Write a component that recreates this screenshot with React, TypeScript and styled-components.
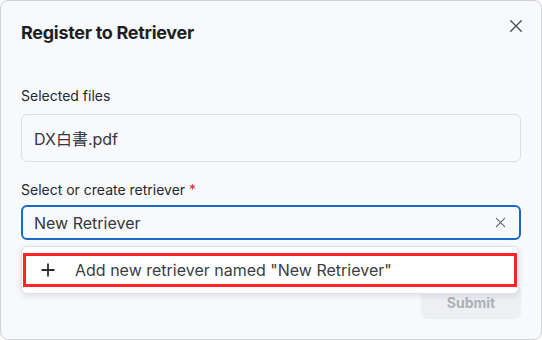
import React from "react";
import styled, { createGlobalStyle } from "styled-components";

const Global = createGlobalStyle`
  html, body { margin: 0; padding: 0; background: #ffffff; }
  body { font-family: Inter, "Noto Sans CJK JP", "Noto Sans", sans-serif; }
  * { box-sizing: border-box; }
`;

const Dialog = styled.div`
  position: relative;
  width: 542px;
  height: 340px;
  border: 1px solid #cdd2da;
  border-radius: 8px;
  background: #f8f9fc;
  padding: 20px 20px 20px 20px;
  display: flex;
  flex-direction: column;
`;

const Header = styled.div`
  display: flex;
  justify-content: space-between;
  align-items: flex-start;
  height: 24px;
`;

const Title = styled.h2`
  margin: 0;
  font-size: 18px;
  line-height: 24px;
  font-weight: 700;
  color: #1d1f23;
  letter-spacing: -0.3px;
`;

const IconButton = styled.button`
  border: none;
  background: none;
  padding: 0;
  margin: -3px -3px 0 0;
  width: 16px;
  height: 16px;
  display: flex;
  align-items: center;
  justify-content: center;
  color: #4b4f57;
  cursor: pointer;
`;

const Field = styled.div<{ $top: number }>`
  margin-top: ${(p) => p.$top}px;
  display: flex;
  flex-direction: column;
  position: relative;
`;

const Label = styled.label<{ $gap: number }>`
  font-size: 14px;
  line-height: 20px;
  color: #26282c;
  margin-bottom: ${(p) => p.$gap}px;
`;

const Req = styled.span`
  color: #d32f2f;
`;

const Box = styled.div<{ $h: number; $focus?: boolean }>`
  height: ${(p) => p.$h}px;
  border: ${(p) => (p.$focus ? "2px solid #1769c9" : "1px solid #d9dde4")};
  border-radius: 6px;
  background: #f8f9fc;
  display: flex;
  align-items: center;
  padding: 0 ${(p) => (p.$focus ? 11 : 12)}px;
  font-size: 16px;
  color: #34373c;
`;

const BoxText = styled.span`
  flex: 1;
`;

const Clear = styled.span`
  display: flex;
  color: #5a5e66;
  margin-right: 2px;
`;

const Menu = styled.div`
  position: absolute;
  top: calc(100% + 6px);
  left: 0;
  right: 2px;
  height: 48px;
  background: #ffffff;
  border: 1px solid #dde1e7;
  border-radius: 6px;
  box-shadow: 0 2px 6px rgba(30, 40, 60, 0.12);
  padding: 6px 1px;
  z-index: 2;
`;

const Option = styled.div`
  height: 34px;
  border: 3px solid #ff2323;
  display: flex;
  align-items: center;
  padding-left: 14px;
  font-size: 16px;
  color: #3a3d42;
  gap: 19px;
`;

const Footer = styled.div`
  margin-top: auto;
  display: flex;
  justify-content: flex-end;
`;

const Submit = styled.button`
  width: 100px;
  height: 34px;
  border: none;
  border-radius: 6px;
  background: #edeff3;
  color: #adb1b8;
  font-family: Inter, sans-serif;
  font-weight: 700;
  font-size: 14px;
`;

const XIcon = ({ size, stroke }: { size: number; stroke: number }) => (
  <svg width={size} height={size} viewBox="0 0 16 16" fill="none">
    <path d="M2 2L14 14M14 2L2 14" stroke="currentColor" strokeWidth={stroke} strokeLinecap="round" />
  </svg>
);

export default function App() {
  return (
    <>
      <Global />
      <Dialog>
        <Header>
          <Title>Register to Retriever</Title>
          <IconButton aria-label="close">
            <XIcon size={14} stroke={1.6} />
          </IconButton>
        </Header>
        <Field $top={41}>
          <Label $gap={8}>Selected files</Label>
          <Box $h={48}>
            <BoxText>DX白書.pdf</BoxText>
          </Box>
        </Field>
        <Field $top={18}>
          <Label $gap={5}>
            Select or create retriever <Req>*</Req>
          </Label>
          <Box $h={35} $focus>
            <BoxText>New Retriever</BoxText>
            <Clear>
              <XIcon size={11} stroke={1.5} />
            </Clear>
          </Box>
          <Menu>
            <Option>
              <svg width="16" height="16" viewBox="0 0 16 16" fill="none">
                <path d="M8 1.5V14.5M1.5 8H14.5" stroke="#2b2e33" strokeWidth="1.8" />
              </svg>
              Add new retriever named "New Retriever"
            </Option>
          </Menu>
        </Field>
        <Footer>
          <Submit>Submit</Submit>
        </Footer>
      </Dialog>
    </>
  );
}
